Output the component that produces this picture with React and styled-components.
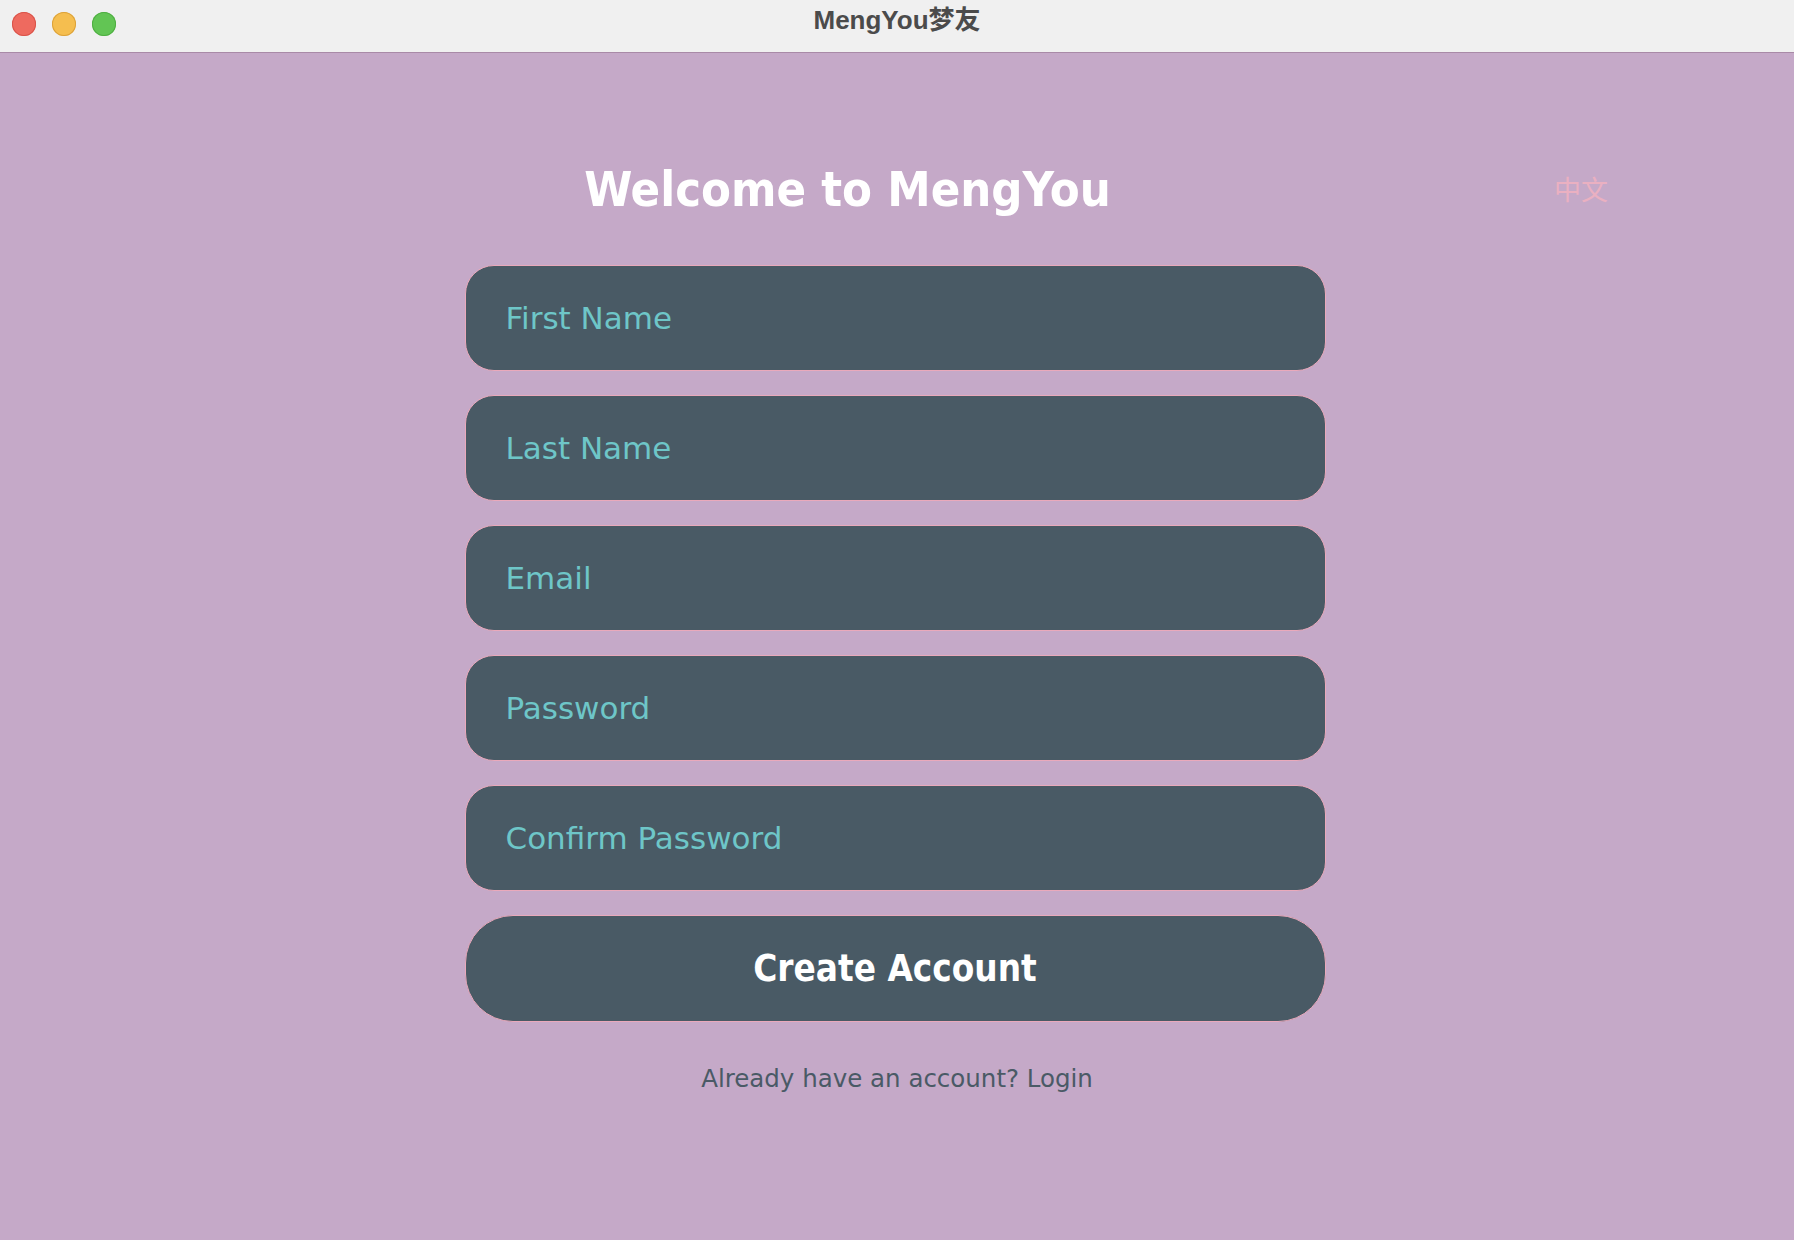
import React from "react";
import styled, { createGlobalStyle } from "styled-components";

const GlobalStyle = createGlobalStyle`
  html, body, #root {
    margin: 0;
    padding: 0;
    height: 100%;
  }
  body {
    background: #c5a9c8;
    font-family: "DejaVu Sans", "Noto Sans", sans-serif;
  }
  * {
    box-sizing: border-box;
  }
`;

const fields = ["First Name", "Last Name", "Email", "Password", "Confirm Password"];

const App = () => {
  return (
    <Window>
      <GlobalStyle />
      <TitleBar>
        <Lights>
          <Light color="#ee6a5f" edge="#d9544a" />
          <Light color="#f5be4f" edge="#dca23a" />
          <Light color="#62c554" edge="#4fae42" />
        </Lights>
        <WindowTitle>MengYou梦友</WindowTitle>
      </TitleBar>

      <Content>
        <Header>
          <Heading>Welcome to MengYou</Heading>
          <LangToggle>中文</LangToggle>
        </Header>

        <Form onSubmit={(e) => e.preventDefault()}>
          {fields.map((label) => (
            <Field
              key={label}
              type={label.includes("Password") ? "password" : "text"}
              placeholder={label}
            />
          ))}
          <SubmitButton type="submit">Create Account</SubmitButton>
        </Form>
        <LoginHint>Already have an account? Login</LoginHint>
      </Content>
    </Window>
  );
};

const Window = styled.div`
  min-height: 100%;
  display: flex;
  flex-direction: column;
`;

const TitleBar = styled.header`
  position: relative;
  height: 53px;
  flex-shrink: 0;
  display: flex;
  align-items: flex-start;
  justify-content: center;
  padding-top: 5px;
  background: #f0f0f0;
  border-bottom: 1px solid #a98aa7;
`;

const Lights = styled.div`
  position: absolute;
  left: 12px;
  top: 12px;
  display: flex;
  gap: 16px;
`;

const Light = styled.span`
  width: 24px;
  height: 24px;
  border-radius: 50%;
  background: ${(p) => p.color};
  box-shadow: inset 0 0 0 1px ${(p) => p.edge};
`;

const WindowTitle = styled.h1`
  margin: 0;
  font-family: "Liberation Sans", "Noto Sans CJK SC", sans-serif;
  font-weight: 700;
  font-size: 26px;
  line-height: 30px;
  color: #4b4b4b;
`;

const Content = styled.main`
  flex: 1;
  background: #c5a9c8;
  padding-top: 107px;
  display: flex;
  flex-direction: column;
  align-items: center;
`;

const Header = styled.div`
  width: 100%;
  display: grid;
  grid-template-columns: 1fr auto;
  column-gap: 45px;
  align-items: center;
  padding: 0 186px;
  height: 58px;
`;

const Heading = styled.h2`
  margin: 0;
  text-align: center;
  font-family: "DejaVu Sans Condensed", "DejaVu Sans", sans-serif;
  font-stretch: condensed;
  font-weight: 700;
  font-size: 48.5px;
  line-height: 58px;
  color: #ffffff;
`;

const LangToggle = styled.span`
  font-family: "Noto Sans CJK SC", sans-serif;
  font-size: 27px;
  line-height: 58px;
  color: #eab0c1;
  cursor: pointer;
`;

const Form = styled.form`
  margin: 47px 4px 0 0;
  width: 861px;
  display: flex;
  flex-direction: column;
  gap: 24px;
`;

const Field = styled.input`
  height: 106px;
  width: 100%;
  padding: 0 40px;
  border: 1px solid #eaa9bb;
  border-radius: 29px;
  background: #495a65;
  color: #ffffff;
  font-family: "DejaVu Sans", sans-serif;
  font-size: 31px;
  outline: none;

  &::placeholder {
    color: #6ec6c8;
  }
`;

const SubmitButton = styled.button`
  height: 107px;
  width: 100%;
  border: 1px solid #eaa9bb;
  border-radius: 48px;
  background: #495a65;
  color: #ffffff;
  font-family: "DejaVu Sans Condensed", "DejaVu Sans", sans-serif;
  font-stretch: condensed;
  font-weight: 700;
  font-size: 36.5px;
  cursor: pointer;
`;

const LoginHint = styled.p`
  margin: 42px 0 0 0;
  text-align: center;
  font-family: "DejaVu Sans", sans-serif;
  font-size: 24.5px;
  color: #4a5a66;
  cursor: pointer;
`;

export default App;
